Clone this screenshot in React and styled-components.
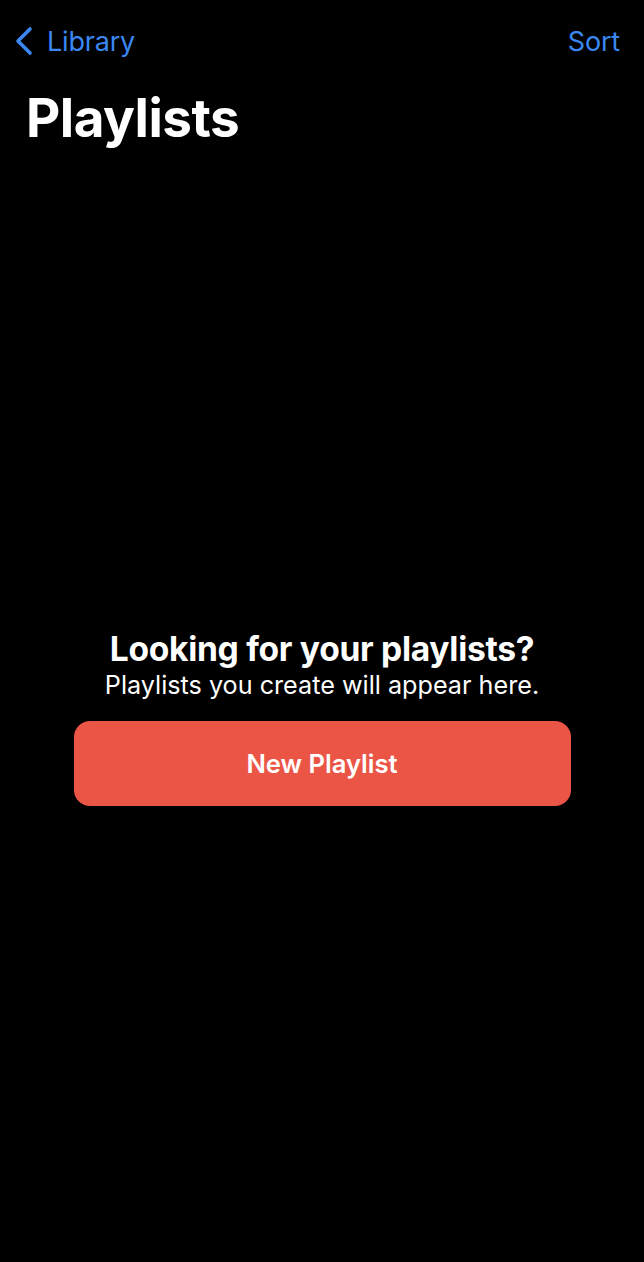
import React from "react";
import styled, { createGlobalStyle } from "styled-components";

const Global = createGlobalStyle`
  html, body { margin: 0; padding: 0; background: #000; }
  body { font-family: Inter, "Open Sans", "Liberation Sans", sans-serif; -webkit-font-smoothing: antialiased; }
`;

const Screen = styled.div`
  width: 644px;
  height: 1262px;
  background: #000;
  display: flex;
  flex-direction: column;
  box-sizing: border-box;
`;

const NavBar = styled.div`
  display: flex;
  align-items: center;
  justify-content: space-between;
  height: 40px;
  margin-top: 21px;
  padding: 0 24px 0 13px;
`;

const NavButton = styled.button`
  display: flex;
  align-items: center;
  gap: 12px;
  background: none;
  border: none;
  padding: 0;
  color: #3b87f3;
  font-family: inherit;
  font-size: 27px;
  font-weight: 400;
  letter-spacing: -0.2px;
  cursor: pointer;
`;

const Title = styled.h1`
  margin: 25px 0 0 26px;
  color: #fff;
  font-size: 53px;
  font-weight: 700;
  letter-spacing: -0.5px;
  line-height: 64px;
`;

const Empty = styled.div`
  flex: 1;
  display: flex;
  flex-direction: column;
  align-items: center;
  padding-top: 479px;
`;

const EmptyTitle = styled.div`
  color: #fff;
  font-size: 33.6px;
  font-weight: 700;
  letter-spacing: -0.3px;
  line-height: 40px;
`;

const EmptyText = styled.div`
  color: #fff;
  font-size: 25.2px;
  font-weight: 400;
  line-height: 32px;
`;

const PrimaryButton = styled.button`
  margin-top: 20px;
  width: 497px;
  height: 85px;
  border: none;
  border-radius: 16px;
  background: #eb5546;
  color: #fff;
  font-family: inherit;
  font-size: 25.6px;
  font-weight: 600;
  cursor: pointer;
`;

export default function App() {
  return (
    <>
      <Global />
      <Screen>
        <NavBar>
          <NavButton>
            <svg width="22" height="30" viewBox="0 0 22 30" fill="none">
              <path d="M17 3 L5 15 L17 27" stroke="#3b87f3" strokeWidth="3.6" strokeLinecap="round" strokeLinejoin="round" />
            </svg>
            Library
          </NavButton>
          <NavButton>Sort</NavButton>
        </NavBar>
        <Title>Playlists</Title>
        <Empty>
          <EmptyTitle>Looking for your playlists?</EmptyTitle>
          <EmptyText>Playlists you create will appear here.</EmptyText>
          <PrimaryButton>New Playlist</PrimaryButton>
        </Empty>
      </Screen>
    </>
  );
}
